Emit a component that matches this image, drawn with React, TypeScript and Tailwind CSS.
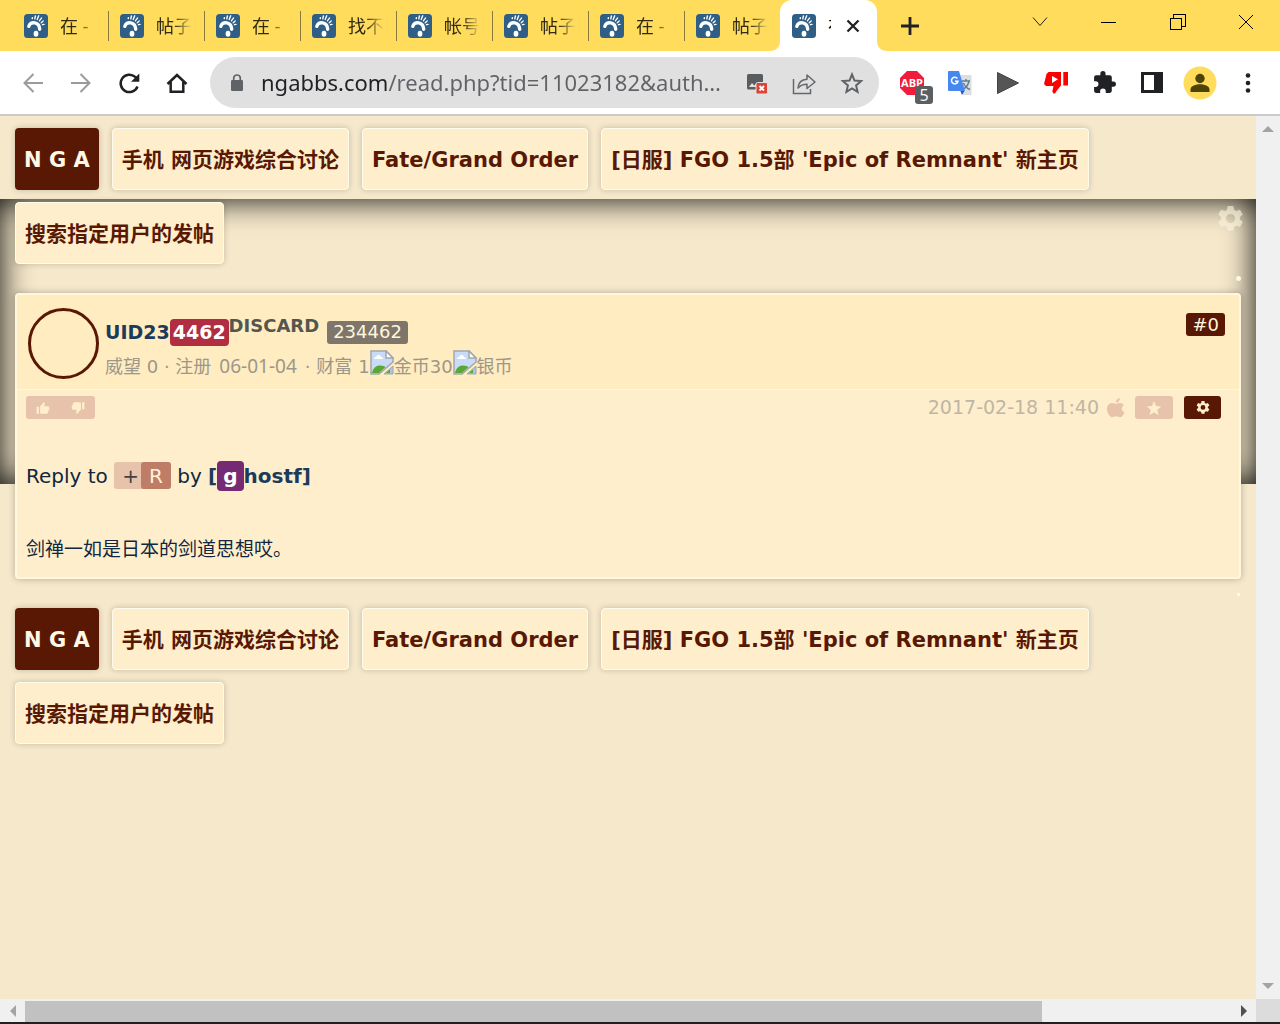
import type { ReactNode } from 'react';

const tabs = ['在 -', '帖子', '在 -', '找不', '帐号', '帖子', '在 -', '帖子'];

function SiteIcon() {
  return (
    <svg viewBox="0 0 24 24" className="size-6 shrink-0" aria-hidden="true">
      <rect width="24" height="24" rx="3.5" fill="#2f5f86" />
      <path d="M4.800 12.300C5.500 9.500 8 8.300 10.800 8.900c3.200.7 4.700 3 4.900 6.300" fill="none" stroke="#fff" strokeWidth="3.400" strokeLinecap="round" />
      <ellipse cx="12" cy="19.800" rx="2.400" ry="3" fill="#fff" />
      <g stroke="#fff" strokeLinecap="round" fill="none">
        <path d="M8.200 4.600l.2-1M10.800 4.800l.6-2.800M13.200 5.400l1.500-3.600" strokeWidth="1.400" />
        <path d="M15.400 6.900l2.200-3M17.200 8.700l2-1.800M18.400 10.700l1.700-.4" strokeWidth="1.300" />
      </g>
    </svg>
  );
}

function ToolButton({ label, children, className = '' }: { label: string; children: ReactNode; className?: string }) {
  return (
    <button type="button" aria-label={label} className={`flex w-12 shrink-0 items-center justify-center ${className}`}>
      {children}
    </button>
  );
}

function TabStrip() {
  return (
    <div className="flex h-[51px] bg-[#ffdc5c] pl-[13px]">
      <div role="tablist" aria-label="Tabs" className="flex">
        {tabs.map((title, i) => (
          <button
            key={i}
            type="button"
            role="tab"
            aria-selected="false"
            className="flex w-24 items-center gap-3 pl-[11px]"
          >
            <SiteIcon />
            <span className="w-9 text-left text-lg whitespace-nowrap text-[#302a14] [mask-image:linear-gradient(90deg,#000_50%,transparent)]">
              {title}
            </span>
            <span className={`ml-auto h-[30px] w-px ${i < 7 ? 'bg-[#8a7a3c]' : ''}`} />
          </button>
        ))}
        <div className="relative -ml-px flex w-[97px] items-center rounded-t-xl bg-white pl-3">
          <svg viewBox="0 0 10 10" className="absolute bottom-0 -left-2.5 size-2.5" aria-hidden="true">
            <path d="M10 0v10H0C6 10 10 6 10 0z" fill="#fff" />
          </svg>
          <svg viewBox="0 0 10 10" className="absolute -right-2.5 bottom-0 size-2.5" aria-hidden="true">
            <path d="M0 0v10h10C4 10 0 6 0 0z" fill="#fff" />
          </svg>
          <button type="button" role="tab" aria-selected="true" className="flex items-center gap-3">
            <SiteIcon />
            <span className="w-[3px] overflow-hidden text-left text-lg whitespace-nowrap">在</span>
          </button>
          <button type="button" aria-label="Close tab" className="ml-2.5 p-1">
            <svg viewBox="0 0 16 16" className="size-4" fill="none" stroke="#202124" strokeWidth="2.300">
              <path d="M2.500 2.500l11 11M13.500 2.500l-11 11" />
            </svg>
          </button>
        </div>
      </div>
      <button type="button" aria-label="New tab" className="ml-6 self-center">
        <svg viewBox="0 0 18 18" className="size-[18px]" fill="none" stroke="#202124" strokeWidth="2.800">
          <path d="M9 0v18M0 9h18" />
        </svg>
      </button>
      <div className="ml-auto flex h-11">
        <button type="button" aria-label="Search tabs" className="flex w-[68px] items-center justify-center">
          <svg viewBox="0 0 16 16" className="size-4" fill="none" stroke="#222">
            <path d="M1 3.500l7 8 7-8" />
          </svg>
        </button>
        <button type="button" aria-label="Minimize" className="flex w-[69px] items-center justify-center">
          <span className="h-px w-[15px] bg-black" />
        </button>
        <button type="button" aria-label="Restore" className="flex w-[69px] items-center justify-center">
          <svg viewBox="0 0 16 16" className="size-4" fill="none" stroke="#000" shapeRendering="crispEdges">
            <path d="M.5 4.500h11v11H.5zM3.500 4V.5h12v11.500H12" />
          </svg>
        </button>
        <button type="button" aria-label="Close" className="flex w-[68px] items-center justify-center">
          <svg viewBox="0 0 16 16" className="size-4" fill="none" stroke="#000">
            <path d="M1 1l14 14M15 1L1 15" />
          </svg>
        </button>
      </div>
    </div>
  );
}

function Toolbar() {
  return (
    <div className="flex h-[65px] items-center border-b-2 border-[#cacacc] bg-white pr-2 pl-[9px]">
      <ToolButton label="Back">
        <svg viewBox="0 0 24 24" className="size-6" fill="none" stroke="#9b9b9b" strokeWidth="2">
          <path d="M22 12H4M12.500 3L3.500 12l9 9" />
        </svg>
      </ToolButton>
      <ToolButton label="Forward">
        <svg viewBox="0 0 24 24" className="size-6" fill="none" stroke="#9b9b9b" strokeWidth="2">
          <path d="M2 12h18M11.500 3l9 9-9 9" />
        </svg>
      </ToolButton>
      <ToolButton label="Reload">
        <svg viewBox="0 0 24 24" className="size-6">
          <path d="M20.500 15.500A8.700 8.700 0 1 1 18.200 5.900L21 8.800" fill="none" stroke="#202124" strokeWidth="2.500" />
          <path d="M22.300 2.500v8.300H14z" fill="#202124" />
        </svg>
      </ToolButton>
      <ToolButton label="Home">
        <svg viewBox="0 0 24 24" className="size-6" fill="none" stroke="#202124" strokeWidth="2.500">
          <path d="M2.500 13L12 4l9.500 9M5.700 11v9.700h12.600V11" />
        </svg>
      </ToolButton>
      <div className="ml-[9px] flex h-[51px] min-w-0 flex-1 items-center rounded-full bg-[#e0e0e0] pr-[3px] pl-5">
        <svg viewBox="0 0 14 18" className="h-[18px] w-3.5 shrink-0" aria-hidden="true">
          <rect x="1" y="6" width="12" height="11" rx="1.200" fill="#5f6368" />
          <path d="M3.700 7V4.300a3.300 3.300 0 0 1 6.600 0V7" fill="none" stroke="#5f6368" strokeWidth="1.700" />
        </svg>
        <input
          type="text"
          aria-label="Address"
          readOnly
          value="ngabbs.com/read.php?tid=11023182&auth…"
          className="ml-[17px] min-w-0 flex-1 bg-[linear-gradient(90deg,#202124_126px,#606266_126px)] bg-clip-text font-['Noto_Sans'] text-[22px] text-transparent outline-none"
        />
        <ToolButton label="Images blocked">
          <svg viewBox="0 0 24 24" className="size-6">
            <rect x="3" y="3" width="16" height="15.500" rx="1.500" fill="#5a5d60" />
            <path d="M5 16l3-4 2.300 2.500 1.200-1.500 1.500 1.500V16z" fill="#e0e0e0" />
            <rect x="12" y="11.500" width="11.500" height="11.500" rx="1.500" fill="#db4437" stroke="#e0e0e0" />
            <path d="M15.500 15l4.500 4.500M20 15l-4.500 4.500" stroke="#fff" strokeWidth="1.800" />
          </svg>
        </ToolButton>
        <ToolButton label="Share">
          <svg viewBox="0 0 24 24" className="size-6" fill="none" stroke="#65686b" strokeWidth="1.500">
            <path d="M1.500 8v14.500h17V18" />
            <path d="M6 17c.5-6 3.500-8.500 9-8.800V4l8 7-8 6.500v-4.200c-4 0-6.500 1-9 3.700z" strokeLinejoin="round" />
          </svg>
        </ToolButton>
        <ToolButton label="Bookmark">
          <svg viewBox="0 0 24 24" className="size-6" fill="none" stroke="#606367" strokeWidth="2">
            <path d="M12 3.500l2.500 6.100 6.600.5-5 4.300 1.500 6.400L12 17.400l-5.600 3.400 1.500-6.400-5-4.300 6.600-.5z" />
          </svg>
        </ToolButton>
      </div>
      <ToolButton label="Ad blocker" className="relative ml-[9px]">
        <svg viewBox="0 0 24 24" className="size-6">
          <path d="M7 0h10l7 7v10l-7 7H7l-7-7V7z" fill="#f01c3c" />
          <text x="12" y="16" textAnchor="middle" fill="#fff" fontFamily="Open Sans" fontSize="11" fontWeight="700">ABP</text>
        </svg>
        <span className="absolute top-[15px] right-[3px] flex size-[18px] items-center justify-center rounded-[3px] bg-[#5c5f62] font-['Open_Sans'] text-base leading-none text-white">5</span>
      </ToolButton>
      <ToolButton label="Translate">
        <svg viewBox="0 0 24 24" className="size-6">
          <path d="M9 4h14.500v20H15z" fill="#dcdee2" />
          <path d="M14 10h8M18 8v2M21 10c-.8 4-3 7-6 8M15.500 12c1 3 3 5 6.500 6.500" fill="none" stroke="#607d8b" strokeWidth="1.400" />
          <path d="M12 19h5l-3 5z" fill="#2a50c0" />
          <path d="M1 0h10l6 20H1a1 1 0 0 1-1-1V1a1 1 0 0 1 1-1z" fill="#4688f0" />
          <path d="M9.400 7.500A3.300 3.300 0 1 0 10 10.300H7" fill="none" stroke="#fff" strokeWidth="1.500" />
        </svg>
      </ToolButton>
      <ToolButton label="Play">
        <svg viewBox="0 0 24 24" className="size-6">
          <path d="M1.500 1.500L22.500 12l-21 10.500z" fill="#555" stroke="#444" />
        </svg>
      </ToolButton>
      <ToolButton label="Dislikes">
        <svg viewBox="0 0 24 24" className="size-6" fill="#f00">
          <path d="M4.500 1H17v13.500L12.500 20l-1.500 2.500H9.500L8.300 20.500l1.200-5.500H2L0 13l2.500-10z" />
          <path d="M19.300 1H24v13.500h-4.700z" />
          <path d="M8 5l6 3.300L8 12z" fill="#fff" />
        </svg>
      </ToolButton>
      <ToolButton label="Extensions">
        <svg viewBox="0 0 24 24" className="size-[25px]" fill="#202124">
          <path d="M20.500 11H19V7a2 2 0 0 0-2-2h-4V3.500a2.500 2.500 0 0 0-5 0V5H4a2 2 0 0 0-2 2v3.800h1.500a2.700 2.700 0 0 1 0 5.400H2V20c0 1.100.9 2 2 2h3.800v-1.500a2.700 2.700 0 0 1 5.400 0V22H17a2 2 0 0 0 2-2v-4h1.500a2.500 2.500 0 0 0 0-5z" />
        </svg>
      </ToolButton>
      <ToolButton label="Side panel">
        <svg viewBox="0 0 22 22" className="size-[22px]">
          <rect x="1.500" y="1.500" width="19" height="18" fill="none" stroke="#202124" strokeWidth="3" />
          <path d="M13 1h8v19h-8z" fill="#202124" />
        </svg>
      </ToolButton>
      <ToolButton label="Profile">
        <svg viewBox="0 0 34 34" className="size-[34px]">
          <circle cx="17" cy="17" r="16.500" fill="#ffdc5c" />
          <circle cx="17" cy="12.500" r="4.700" fill="#4f4207" />
          <path d="M7.500 26v-2.500c0-3.700 5.500-5.200 9.500-5.200s9.500 1.500 9.500 5.200V26z" fill="#4f4207" />
        </svg>
      </ToolButton>
      <ToolButton label="Menu">
        <svg viewBox="0 0 24 24" className="size-6" fill="#202124">
          <circle cx="12" cy="4.500" r="2.300" />
          <circle cx="12" cy="12" r="2.300" />
          <circle cx="12" cy="19.500" r="2.300" />
        </svg>
      </ToolButton>
    </div>
  );
}

const crumbs = ['手机 网页游戏综合讨论', 'Fate/Grand Order', "[日服] FGO 1.5部 'Epic of Remnant' 新主页", '搜索指定用户的发帖'];

function Breadcrumbs({ label }: { label: string }) {
  return (
    <nav aria-label={label} className="flex flex-wrap gap-x-[13px] gap-y-3 text-[21px] font-bold">
      <a href="#home" className="flex h-[62px] items-center rounded-sm bg-[#591804] px-[9px] pt-1 text-[#fff8e7] shadow-[0_0_6px_#0003]">
        N G A
      </a>
      {crumbs.map((text) => (
        <a
          key={text}
          href="#forum"
          className="flex h-[62px] items-center rounded-sm border border-[#fffcee] bg-[#ffeecb] px-[9px] pt-1 text-[#591804] shadow-[0_0_6px_#0003]"
        >
          {text}
        </a>
      ))}
    </nav>
  );
}

function Gear({ className }: { className: string }) {
  return (
    <svg viewBox="0 0 24 24" className={className} fill="currentColor" aria-hidden="true">
      <path
        fillRule="evenodd"
        d="M9.500 0h5l.6 3.400 2 1.100 3.300-1.200 2.500 4.300-2.600 2.300v2.200l2.600 2.200-2.500 4.300-3.300-1.100-2 1.200-.6 3.300h-5l-.6-3.300-2-1.200-3.300 1.100-2.500-4.300 2.600-2.200V9.900L1.100 7.600l2.500-4.300 3.300 1.200 2-1.100zM12 7a4.100 4.100 0 1 0 0 8.200A4.100 4.100 0 0 0 12 7z"
      />
    </svg>
  );
}

function BrokenImage() {
  return (
    <svg viewBox="0 0 24 25" className="mb-2 h-[25px] w-6 shrink-0" aria-hidden="true">
      <path d="M1 1h15l7 7v4L9 24H1z" fill="#c8dcf8" stroke="#a4a6aa" strokeWidth="1.500" />
      <path d="M2 23c1-5 4-7.500 8-7.500 3 0 4.500.8 5.500 1.500L9 23z" fill="#58a834" />
      <path d="M4 9c0-2 2-2 2-2 1-3 5-2 5 0 2 0 2 2 2 2z" fill="#fff" />
      <path d="M16 1v7h7z" fill="#fff" stroke="#a4a6aa" strokeWidth="1.500" />
      <path d="M23 16v8h-9z" fill="#a9c4e6" stroke="#a4a6aa" />
      <path d="M20 19.500V23h-4z" fill="#58a834" />
    </svg>
  );
}

const thumb =
  'M1 10h4v12H1zM22.500 11c0-1.100-.9-2-2-2h-6.300l1-4.600V4c0-.4-.2-.8-.4-1l-1.100-1.100L7.600 8.400C7.200 8.800 7 9.300 7 10v10c0 1.100.9 2 2 2h9c.8 0 1.500-.5 1.800-1.200l3-7.100c.1-.2.2-.5.2-.7z';

function Post() {
  return (
    <article className="rounded-sm border-2 border-[#fff8df] bg-[#ffeecb] shadow-[0_0_7px_#0004]">
      <header className="flex h-[95px] items-start border-b border-[#fff6de] bg-[#ffecc1] pr-3.5 pl-[11px]">
        <span className="mt-[13px] size-[71px] shrink-0 rounded-full border-[3px] border-[#591804]" />
        <div className="ml-1.5 min-w-0 flex-1 pt-[19px] whitespace-nowrap">
          <div className="flex h-9 items-center text-[19px] font-bold">
            <a href="#user" className="flex items-center text-[#1c3b5c]">
              UID23
              <span className="flex h-[27px] items-center rounded-sm bg-[#b12d42] px-[3px] text-white">4462</span>
            </a>
            <span className="mb-3 text-lg text-[#555550]">DISCARD</span>
            <span className="ml-2 flex h-[23px] items-center rounded-[3px] bg-[#7f766b] px-1.5 text-lg font-normal text-[#fff5dc]">234462</span>
          </div>
          <div className="flex h-[33px] items-center text-lg text-[#9d9789]">
            威望 0 · 注册 <span className="mx-2 font-['Noto_Sans'] text-[19px]">06-01-04</span> · 财富{' '}
            <span className="ml-1.5">1</span>
            <BrokenImage />
            金币30
            <BrokenImage />
            银币
          </div>
        </div>
        <a href="#floor" className="mt-[18px] flex h-[23px] items-center rounded-[3px] bg-[#591804] px-1.5 text-lg text-[#fff5dc]">#0</a>
      </header>
      <div className="flex h-[35px] items-center pr-[18px] pl-[9px]">
        <div className="flex h-[23px] w-[69px] items-center justify-around rounded-[3px] bg-[#e6c3aa] text-[#ffeecb]">
          <button type="button" aria-label="Like">
            <svg viewBox="0 0 24 24" className="size-3.5" fill="currentColor"><path d={thumb} /></svg>
          </button>
          <button type="button" aria-label="Dislike">
            <svg viewBox="0 0 24 24" className="size-3.5 rotate-180" fill="currentColor"><path d={thumb} /></svg>
          </button>
        </div>
        <time dateTime="2017-02-18T11:40" className="ml-auto text-[19px] text-[#beb6a7]">2017-02-18 11:40</time>
        <svg viewBox="0 0 18 20" className="ml-2 h-5 w-[18px]" fill="#e6c3aa" aria-hidden="true">
          <path d="M9 6c1-.1 2.300-1 4-.9 1.800.1 3 1 3.800 2.100-3 1.900-2.600 5.700.7 7-.7 2-2.500 4.900-4.300 5-1.600.1-2-.9-4-.9s-2.500.9-4 .9C2.500 19.100 0 14.500 0 11c0-3.700 2.300-5.900 4.800-5.900C6.500 5.100 7.800 6 9 6zM8.800 4.700C8.700 2.300 10.700.3 12.900 0c.2 2.500-1.900 4.600-4.100 4.700z" />
        </svg>
        <button type="button" aria-label="Favorite" className="ml-2.5 flex h-[23px] w-[38px] items-center justify-center rounded-[3px] bg-[#e6c3aa] text-[#ffeecb]">
          <svg viewBox="0 0 24 24" className="size-4" fill="currentColor"><path d="M12 1.500l3 7.500 8 .6-6.100 5.200 1.900 7.900L12 18.400l-6.800 4.300 1.900-7.900L1 9.600 9 9z" /></svg>
        </button>
        <button type="button" aria-label="Post options" className="ml-[11px] flex h-[23px] w-[37px] items-center justify-center rounded-[3px] bg-[#591804] text-[#ffeecb]">
          <Gear className="size-3.5" />
        </button>
      </div>
      <div className="px-[9px] pt-8 pb-[9px] text-[#10273f]">
        <p className="flex h-[37px] items-center text-xl whitespace-pre">
          Reply to <a href="#expand" className="flex h-[27px] items-center rounded-[3px] bg-[#e6c3aa] pl-2 text-[#3c4544]">+<span className="ml-0.5 flex h-full items-center rounded-[3px] bg-[#bf7c67] px-2 text-[#fff0d8]">R</span></a> by{' '}
          <a href="#author" className="flex items-center font-bold text-[#1c3b5c]">
            [<span className="flex h-[30px] items-center rounded-sm bg-[#772a74] px-1.5 text-white">g</span>hostf]
          </a>
        </p>
        <p className="mt-[37px] text-[19px] leading-[37px]">剑禅一如是日本的剑道思想哎。</p>
      </div>
    </article>
  );
}

export default function App() {
  return (
    <div className="flex min-h-screen flex-col bg-[#f5e8cb] font-['DejaVu_Sans','Noto_Sans_CJK_SC',sans-serif]">
      <header className="font-['Open_Sans','Noto_Sans_CJK_SC',sans-serif]">
        <TabStrip />
        <Toolbar />
      </header>
      <div className="flex flex-1">
        <main className="relative min-w-0 flex-1 px-[15px] pt-3">
          <div className="absolute inset-x-0 top-[83px] h-[285px] shadow-[inset_0_0_32px_#000]" />
          <button type="button" aria-label="Settings" className="absolute top-[90px] right-3 text-[#fff6e0]/60">
            <Gear className="size-[27px]" />
          </button>
          <span className="absolute top-40 right-[15px] size-[5px] rounded-full bg-[#fff6df]" />
          <span className="absolute top-[477px] right-4 size-[3px] bg-[#fff9e6]" />
          <div className="relative flex flex-col gap-[29px]">
            <Breadcrumbs label="Location" />
            <Post />
            <Breadcrumbs label="Footer location" />
          </div>
        </main>
        <div className="flex w-6 flex-col items-center justify-between bg-[#f0f0f0] py-2.5">
          <svg viewBox="0 0 12 6" className="h-1.5 w-3" fill="#a3a3a3" aria-hidden="true"><path d="M6 0l6 6H0z" /></svg>
          <svg viewBox="0 0 12 6" className="h-1.5 w-3" fill="#a3a3a3" aria-hidden="true"><path d="M6 6l6-6H0z" /></svg>
        </div>
      </div>
      <div className="flex h-[25px] border-b-2 border-[#202020] bg-[#f0f0f0]">
        <div className="flex w-[25px] items-center justify-center">
          <svg viewBox="0 0 6 12" className="h-3 w-1.5" fill="#a3a3a3" aria-hidden="true"><path d="M0 6l6-6v12z" /></svg>
        </div>
        <div className="flex flex-1 pt-0.5">
          <div className="mr-[189px] flex-1 bg-[#c1c1c1]" />
        </div>
        <div className="flex w-[25px] items-center justify-center">
          <svg viewBox="0 0 6 12" className="h-3 w-1.5" fill="#505050" aria-hidden="true"><path d="M6 6L0 0v12z" /></svg>
        </div>
        <div className="w-6 bg-[#dcdcdc]" />
      </div>
    </div>
  );
}
